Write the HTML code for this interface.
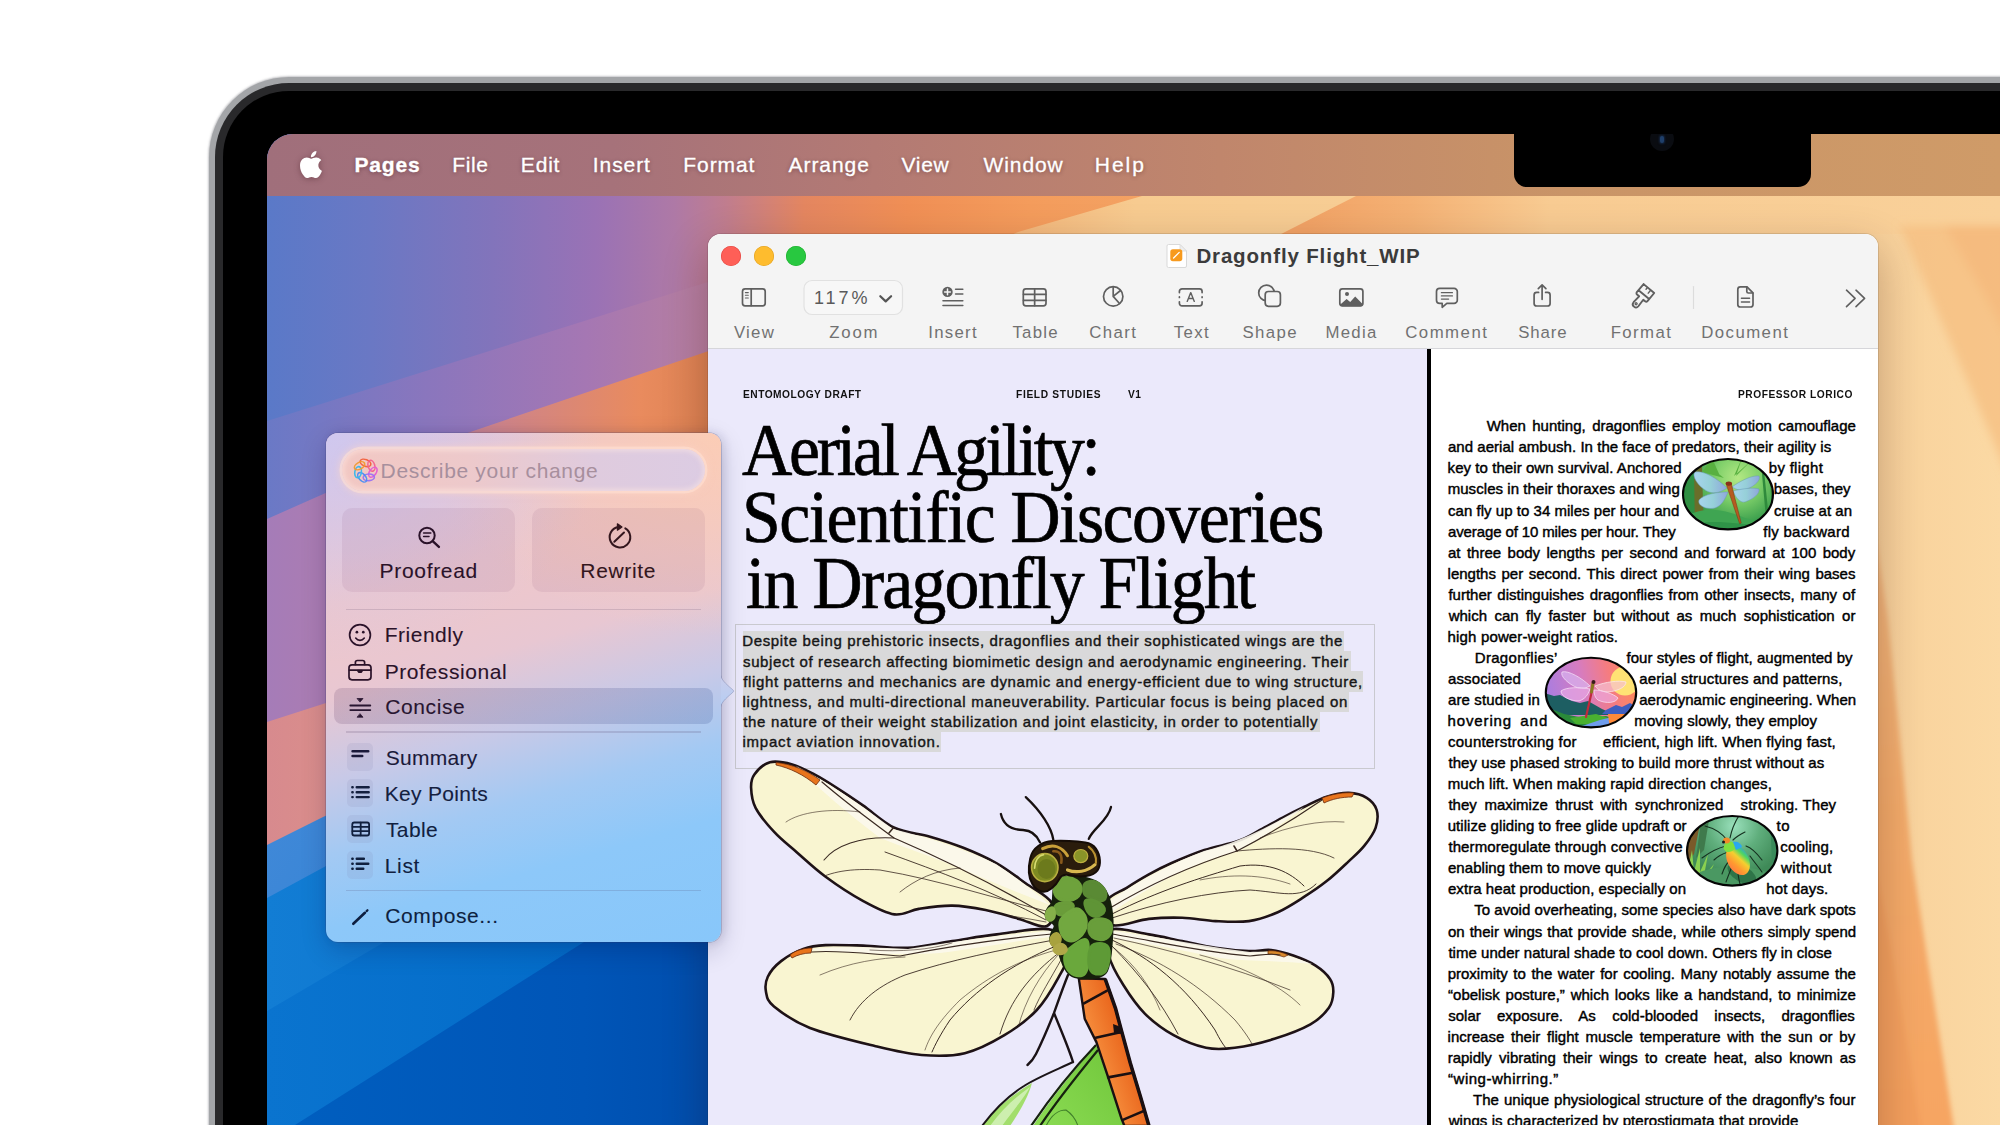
<!DOCTYPE html>
<html lang="en">
<head>
<meta charset="utf-8">
<title>Pages — Dragonfly Flight_WIP</title>
<style>
*{box-sizing:border-box;margin:0;padding:0}
html,body{width:2000px;height:1125px;overflow:hidden;background:#fff}
body{position:relative;font-family:"Liberation Sans",sans-serif;color:#000}
.abs{position:absolute}
/* laptop */
#rim{position:absolute;left:209px;top:77px;width:1900px;height:1200px;border-radius:80px;
  background:#a3a5a8;box-shadow:0 0 2px 1px rgba(160,160,165,.6)}
#rim2{position:absolute;left:215px;top:83px;width:1900px;height:1200px;border-radius:74px;background:#29292b}
#bezel{position:absolute;left:223px;top:91px;width:1900px;height:1200px;border-radius:66px;background:#000}
#screen{position:absolute;left:267px;top:134px;width:1733px;height:991px;border-top-left-radius:26px;overflow:hidden;background:#5d78c5}
#screen>svg.wall{position:absolute;left:0;top:0}
/* menu bar */
#menubar{position:absolute;left:0;top:0;width:1733px;height:62px;
  background:linear-gradient(90deg,#a06f7b 0%,#a6727a 20%,#b37a74 35%,#c0866c 55%,#c99467 75%,#cf9b68 100%)}
.t{position:absolute;white-space:nowrap;display:block}
.pp{-webkit-text-stroke:.1px currentColor}
.hh{-webkit-text-stroke:.7px #000}
.mi{-webkit-text-stroke:.3px #fff;text-shadow:0 1px 4px rgba(60,20,30,.45)}
.rt{-webkit-text-stroke:.42px #000}
.bt{-webkit-text-stroke:.4px #161616}
#notch{position:absolute;left:1247px;top:-20px;width:297px;height:73px;border-radius:13px;background:#000}
#cam{position:absolute;left:1383.400px;top:-6.800px;width:24px;height:24px;border-radius:50%;background:#0a0c11}
#cam i{position:absolute;left:10px;top:8.500px;width:4px;height:7px;border-radius:2px;background:#1f3f6a;box-shadow:0 0 2px 1px rgba(30,60,110,.5)}
/* window */
#win{position:absolute;left:441px;top:100px;width:1170px;height:950px;border-radius:13px 13px 0 0;overflow:hidden;
  background:#fff;}
#winshadow{position:absolute;left:441px;top:100px;width:1170px;height:950px;border-radius:13px;
  box-shadow:0 16px 44px 2px rgba(40,10,10,.24),0 0 0 1px rgba(0,0,0,.1)}
#tb{position:absolute;left:0;top:0;width:1170px;height:115px;background:#f4f4f4;border-bottom:1px solid #d6d6da}
.tl{position:absolute;top:12px;width:20px;height:20px;border-radius:50%}
.lbl{position:absolute;top:86px;height:24px;line-height:24px;font-size:18px;color:#717171;white-space:nowrap;letter-spacing:.4px}
.ico{position:absolute;overflow:visible}
#pageL{position:absolute;left:0;top:115px;width:719px;height:841px;background:#ebe9fb}
#divider{position:absolute;left:719px;top:115px;width:4px;height:841px;background:#000}
#pageR{position:absolute;left:723px;top:115px;width:447px;height:841px;background:#fff}
.cap{position:absolute;font-size:10.5px;font-weight:bold;letter-spacing:.35px;white-space:nowrap;line-height:12px;color:#111}
.h1{position:absolute;left:0;white-space:nowrap;font-family:"Liberation Serif",serif;font-size:76px;line-height:80px;color:#000;transform-origin:0 50%}
.bl{position:absolute;white-space:nowrap;font-size:14.6px;line-height:20px;height:20px;color:#111;-webkit-text-stroke:.25px #111}
.bl b{font-weight:normal;background:#d9d9d9;display:inline-block;height:20px}
.rl{position:absolute;white-space:nowrap;font-size:14.8px;line-height:21px;height:21px;color:#000;-webkit-text-stroke:.3px #000}
/* popup */
#pop{position:absolute;left:59px;top:298.5px;width:395px;height:509px;border-radius:12px;overflow:hidden}
#popshadow{position:absolute;left:59px;top:298.5px;width:395px;height:509px;border-radius:12px;
  box-shadow:0 8px 26px rgba(0,10,60,.2),3px 0 10px rgba(40,40,80,.12),0 0 0 .8px rgba(60,70,120,.28)}
.pt{position:absolute;white-space:nowrap;font-size:21px;line-height:28px;height:28px;color:#2a1828}
.sep{position:absolute;left:20px;width:355px;height:1.5px;background:rgba(70,50,90,.16)}
.ibox{position:absolute;left:21px;width:26px;height:28px;border-radius:5px;background:rgba(120,120,170,.13)}
#popbg{position:absolute;inset:0;background:
 radial-gradient(ellipse 70% 45% at 0% 0%,rgba(206,200,240,.95),rgba(206,200,240,0) 100%),
 radial-gradient(ellipse 75% 40% at 100% 0%,rgba(252,205,180,.95),rgba(252,205,180,0) 100%),
 linear-gradient(164deg,#e6c5d8 0%,#efc7ca 28%,#e8c7d2 43%,#c8c9e7 56%,#a3c9f3 68%,#8dc8f9 80%,#88c7fa 100%)}
#sf{position:absolute;left:16.300px;top:16px;width:362.400px;height:42px;border-radius:21px;
 background:linear-gradient(90deg,#f2c8c3 0%,#edc9cb 35%,#dfcbde 70%,#dccce3 100%);
 box-shadow:0 0 0 2.500px rgba(255,226,214,.55),0 0 7px 3px rgba(255,214,196,.55),inset 0 0 5px 2px rgba(255,232,225,.55)}
.pbtn{position:absolute;border-radius:10px;background:rgba(120,60,100,.085)}
</style>
</head>
<body>
<div id="rim"></div><div id="rim2"></div><div id="bezel"></div>
<div id="screen">
<svg class="wall" width="1733" height="991" viewBox="267 134 1733 991">
<defs>
<linearGradient id="gA" gradientUnits="userSpaceOnUse" x1="267" y1="0" x2="2000" y2="0">
 <stop offset="0" stop-color="#5a79c8"/><stop offset=".06" stop-color="#6a78c4"/><stop offset=".13" stop-color="#8274bb"/>
 <stop offset=".19" stop-color="#9a72b5"/><stop offset=".235" stop-color="#ae79a6"/><stop offset=".265" stop-color="#c07d8e"/>
 <stop offset=".31" stop-color="#e48660"/><stop offset=".37" stop-color="#f08f55"/><stop offset=".44" stop-color="#f49c5c"/>
 <stop offset=".52" stop-color="#f3a364"/><stop offset=".6" stop-color="#f2a366"/><stop offset=".66" stop-color="#f4b174"/><stop offset=".74" stop-color="#f8cb92"/><stop offset="1" stop-color="#f9d19a"/>
</linearGradient>
<linearGradient id="gB" gradientUnits="userSpaceOnUse" x1="267" y1="0" x2="800" y2="0">
 <stop offset="0" stop-color="#6a79c6"/><stop offset=".3" stop-color="#8a76bd"/><stop offset=".6" stop-color="#a577b3"/>
 <stop offset=".83" stop-color="#b87f9f"/><stop offset="1" stop-color="#d08a80"/>
</linearGradient>
<linearGradient id="gC" gradientUnits="userSpaceOnUse" x1="267" y1="0" x2="800" y2="0">
 <stop offset="0" stop-color="#a57cb8"/><stop offset=".2" stop-color="#b07cac"/><stop offset=".45" stop-color="#cf8488"/>
 <stop offset=".7" stop-color="#e98b5e"/><stop offset=".83" stop-color="#dd8252"/><stop offset="1" stop-color="#cd7646"/>
</linearGradient>
<linearGradient id="gD" gradientUnits="userSpaceOnUse" x1="267" y1="0" x2="800" y2="0">
 <stop offset="0" stop-color="#d78a8e"/><stop offset=".5" stop-color="#e59a80"/><stop offset="1" stop-color="#e8a070"/>
</linearGradient>
<linearGradient id="gE" gradientUnits="userSpaceOnUse" x1="267" y1="800" x2="700" y2="1100">
 <stop offset="0" stop-color="#4189d8"/><stop offset="1" stop-color="#1c78cf"/>
</linearGradient>
<linearGradient id="gF" gradientUnits="userSpaceOnUse" x1="267" y1="0" x2="720" y2="0">
 <stop offset="0" stop-color="#127dd4"/><stop offset="1" stop-color="#076cc8"/>
</linearGradient>
<linearGradient id="gG" gradientUnits="userSpaceOnUse" x1="267" y1="0" x2="720" y2="0">
 <stop offset="0" stop-color="#0a74cf"/><stop offset="1" stop-color="#0068c6"/>
</linearGradient>
<linearGradient id="gH" gradientUnits="userSpaceOnUse" x1="267" y1="0" x2="720" y2="0">
 <stop offset="0" stop-color="#005fc0"/><stop offset=".7" stop-color="#0055b7"/><stop offset="1" stop-color="#004dac"/>
</linearGradient>
<linearGradient id="gR1" gradientUnits="userSpaceOnUse" x1="1878" y1="0" x2="2000" y2="0">
 <stop offset="0" stop-color="#f8d19b"/><stop offset="1" stop-color="#fbd9a4"/>
</linearGradient>
<linearGradient id="gR2" gradientUnits="userSpaceOnUse" x1="1878" y1="440" x2="1900" y2="1125">
 <stop offset="0" stop-color="#f0bb84"/><stop offset=".5" stop-color="#f3ac6c"/><stop offset="1" stop-color="#f6a562"/>
</linearGradient>
<linearGradient id="gT2" gradientUnits="userSpaceOnUse" x1="1020" y1="0" x2="1350" y2="0">
 <stop offset="0" stop-color="#f4b87c"/><stop offset=".35" stop-color="#f7cb90"/><stop offset="1" stop-color="#f7cd94"/>
</linearGradient>
<filter id="soft" x="-20%" y="-20%" width="140%" height="140%"><feGaussianBlur stdDeviation="5"/></filter><filter id="soft2" x="-20%" y="-20%" width="140%" height="140%"><feGaussianBlur stdDeviation="2.5"/></filter>
</defs>
<rect x="267" y="134" width="1733" height="991" fill="url(#gA)"/>
<!-- top lighter band -->
<polygon points="1000,240 1018,232 1142,196 1356,196 1285,232 1270,240" fill="url(#gT2)"/>
<!-- band B -->
<polygon points="267,421 708,282 722,277.6 722,700 267,700" fill="url(#gB)"/>
<!-- band C -->
<polygon points="267,519 400,460 469.5,432.2 708,351.2 722,346.4 722,900 267,900" fill="url(#gC)"/>
<!-- band D -->
<polygon points="267,722 326,703 720,560 720,1000 267,1000" fill="url(#gD)"/>
<!-- blue -->
<polygon points="267,845 323,817 720,640 720,1125 267,1125" fill="url(#gE)"/>
<polygon points="267,898 326,866 720,680 720,1125 267,1125" fill="url(#gF)"/>
<polygon points="267,1011 381,944 720,760 720,1125 267,1125" fill="url(#gG)"/>
<polygon points="267,1143 295,1125 584,942 720,860 720,1125" fill="url(#gH)"/>
<!-- right side -->
<rect x="1870" y="234" width="130" height="891" fill="url(#gR1)"/>
<g filter="url(#soft)">
<polygon points="1900,226 2010,226 2010,480" fill="#f6bd80" opacity=".75"/>
<polygon points="1945,226 2010,226 2010,340" fill="#f4b274" opacity=".45"/>
</g>
<g filter="url(#soft2)">
<polygon points="1860,430 1888,620 1912,860 1955,1135 1860,1135" fill="url(#gR2)"/>
<polygon points="1860,780 1893,960 1922,1135 1860,1135" fill="#f19a5a" opacity=".55"/>
</g>
</svg>
<div id="menubar">
<svg class="abs" style="left:33px;top:17px;filter:drop-shadow(0 1px 3px rgba(60,20,30,.4))" width="22" height="27" viewBox="0 0 814 1000"><path fill="#fff" d="M788.1 340.9c-5.800 4.500-108.200 62.200-108.200 190.500 0 148.400 130.300 200.900 134.200 202.200-.600 3.200-20.700 71.900-68.700 141.900-42.800 61.600-87.500 123.100-155.500 123.100s-85.500-39.500-164-39.500c-76.500 0-103.700 40.800-165.900 40.800s-105.600-57-155.500-127C46.700 790.700 0 663 0 541.800c0-194.400 126.400-297.500 250.800-297.500 66.100 0 121.200 43.400 162.700 43.400 39.500 0 101.100-46 176.300-46 28.500 0 130.900 2.600 198.300 99.200zm-234-181.500c31.100-36.900 53.100-88.100 53.100-139.300 0-7.100-.600-14.300-1.900-20.100-50.600 1.900-110.800 33.700-147.100 75.800-28.500 32.400-55.100 83.600-55.100 135.500 0 7.800 1.300 15.600 1.900 18.100 3.200.600 8.400 1.300 13.600 1.300 45.400 0 102.500-30.400 135.500-71.300z"/></svg>
<span class="t mi" style="letter-spacing:0.823px;left:87.44px;top:16.72px;font-size:21px;line-height:27px;height:27px;font-weight:bold;color:#fff;">Pages</span>
<span class="t mi" style="letter-spacing:0.551px;left:185.36px;top:16.72px;font-size:21px;line-height:27px;height:27px;color:#fff;">File</span>
<span class="t mi" style="letter-spacing:0.794px;left:253.86px;top:16.72px;font-size:21px;line-height:27px;height:27px;color:#fff;">Edit</span>
<span class="t mi" style="letter-spacing:0.910px;left:325.86px;top:16.72px;font-size:21px;line-height:27px;height:27px;color:#fff;">Insert</span>
<span class="t mi" style="letter-spacing:0.912px;left:416.36px;top:16.72px;font-size:21px;line-height:27px;height:27px;color:#fff;">Format</span>
<span class="t mi" style="letter-spacing:0.940px;left:521.50px;top:16.72px;font-size:21px;line-height:27px;height:27px;color:#fff;">Arrange</span>
<span class="t mi" style="letter-spacing:0.702px;left:634.50px;top:16.72px;font-size:21px;line-height:27px;height:27px;color:#fff;">View</span>
<span class="t mi" style="letter-spacing:0.911px;left:716.50px;top:16.72px;font-size:21px;line-height:27px;height:27px;color:#fff;">Window</span>
<span class="t mi" style="letter-spacing:1.934px;left:827.86px;top:16.72px;font-size:21px;line-height:27px;height:27px;color:#fff;">Help</span>
</div>
<div id="notch"></div><div id="cam"><i></i></div>
<div id="winshadow"></div>
<div id="win">
<div id="tb">
<div class="tl" style="left:13.0px;background:#fe5f57;box-shadow:inset 0 0 0 .6px #e14640"></div><div class="tl" style="left:45.6px;background:#febc2e;box-shadow:inset 0 0 0 .6px #dfa023"></div><div class="tl" style="left:78.0px;background:#28c840;box-shadow:inset 0 0 0 .6px #1dad2b"></div>
<svg class="abs" style="left:458px;top:9px" width="23" height="26" viewBox="0 0 23 26"><path d="M2.500 1.500h11.500l6.500 6.500v15a1.500 1.500 0 0 1-1.500 1.500h-16.500a1.500 1.500 0 0 1-1.500-1.500v-20a1.500 1.500 0 0 1 1.500-1.500z" fill="#fff" stroke="#d9d9d9" stroke-width="1"/><path d="M14 1.500v5a1.500 1.500 0 0 0 1.500 1.500h5z" fill="#eee" stroke="#d9d9d9" stroke-width=".8"/><rect x="4.300" y="6.200" width="12" height="12" rx="2.600" fill="#f79a1e"/><path d="M7.600 15l5.600-5.600" stroke="#fff" stroke-width="1.300" stroke-linecap="round"/></svg>
<span class="t" style="letter-spacing:0.845px;left:488.42px;top:8.20px;font-size:20.5px;line-height:27px;height:27px;font-weight:bold;color:#3b3b3b;">Dragonfly Flight_WIP</span>
<svg class="abs" style="left:0;top:0" width="1170" height="115" viewBox="708 234 1170 115" fill="none" stroke="#5f5f5f" stroke-width="1.7" stroke-linecap="round" stroke-linejoin="round">
<!-- view -->
<rect x="742.5" y="288.8" width="22.7" height="17" rx="2.6"/>
<path d="M751.2 289v16.6"/>
<path d="M745.4 292.6h2.9M745.4 295.3h2.9M745.4 298h2.9" stroke-width="1.1"/>
<!-- zoom box -->
<rect x="804" y="280.5" width="98.5" height="34" rx="8" fill="#f7f7f7" stroke="#e1e1e1" stroke-width="1.2"/>
<path d="M880.3 296.2l5.4 5.2 5.4-5.2" stroke="#555" stroke-width="2.2"/>
<!-- insert -->
<circle cx="947.5" cy="291.9" r="5.2" fill="#5f5f5f" stroke="none"/>
<path d="M944.6 291.9h5.8M947.5 289v5.8" stroke="#f4f4f4" stroke-width="1.5"/>
<path d="M955.6 289.2h7.2M955.6 294h7.2M943 300.7h19.8M943 305.5h19.8" stroke-width="1.6"/>
<!-- table -->
<rect x="1023.3" y="288.8" width="22.7" height="17" rx="2.6"/>
<path d="M1034.65 289v16.6M1023.5 294.3h22.3M1023.5 300.4h22.3"/>
<!-- chart -->
<circle cx="1113.2" cy="296.4" r="9.7"/>
<path d="M1113.2 286.9v9.5l7.3-5.9M1113.2 296.4l6.3 7.1"/>
<!-- text -->
<path d="M1179.4 292.6v-1.2a2.6 2.6 0 0 1 2.6-2.6h17.500a2.600 2.600 0 0 1 2.600 2.600v1.200M1179.4 301.8v1.400a2.600 2.600 0 0 0 2.600 2.600h17.500a2.600 2.600 0 0 0 2.600-2.600v-1.400M1179.400 296.900v.6M1202.100 296.900v.6"/>
<path d="M1187.200 301.400l3.550-8.800 3.550 8.800M1188.500 298.500h4.500" stroke-width="1.400"/>
<!-- shape -->
<circle cx="1266.500" cy="292.900" r="7.800"/>
<rect x="1265.200" y="291.500" width="15.200" height="14.800" rx="3.200" fill="#f4f4f4"/>
<!-- media -->
<rect x="1339.800" y="288.800" width="23.100" height="17" rx="2.600"/>
<circle cx="1347" cy="294" r="2" fill="#5f5f5f" stroke="none"/>
<path d="M1340.300 304.500l6.300-5.600 3.600 3 5-5.400 7.400 7.400v.6a1.800 1.800 0 0 1-1.800 1.800h-18.700a1.800 1.800 0 0 1-1.800-1.800z" fill="#5f5f5f" stroke="none"/>
<!-- comment -->
<path d="M1439.700 288.400h14.400a3.200 3.200 0 0 1 3.200 3.200v8.600a3.200 3.200 0 0 1-3.200 3.200h-7.300l-4.600 3.900v-3.900h-2.500a3.200 3.200 0 0 1-3.200-3.200v-8.600a3.200 3.200 0 0 1 3.200-3.200z"/>
<path d="M1441.400 292.700h11M1441.400 295.900h11M1441.400 299.100h7.200" stroke-width="1.300"/>
<!-- share -->
<path d="M1538.600 292.400h-1.900a2.600 2.600 0 0 0-2.600 2.600v8.400a2.600 2.600 0 0 0 2.600 2.600h10.800a2.600 2.600 0 0 0 2.600-2.600v-8.400a2.600 2.600 0 0 0-2.600-2.600h-1.900"/>
<path d="M1542.100 299.300v-14M1538.300 288.600l3.800-3.700 3.800 3.700"/>
<!-- format brush -->
<g transform="translate(1641.500 297.400) rotate(40) scale(1.1)">
<path d="M-6.300 -10.500h12.600v7.200h-12.600z M-6.300 -3.300h12.600v2.400a1.500 1.500 0 0 1-1.500 1.500h-2.200l.4 7.400a2.850 2.850 0 0 1-5.700 0l.4-7.400h-2.500a1.500 1.500 0 0 1-1.500-1.500z"/>
<path d="M-6.300 -10.500l0 0M2.200 -10.300v3.400M-1.600 -10.300v2" stroke-width="1.300"/>
<circle cx="0" cy="7.600" r=".9" stroke-width="1.200"/>
</g>
<path d="M1693.500 286.500v22" stroke="#dcdcdc" stroke-width="1.200"/>
<!-- document -->
<path d="M1740.400 286.800h6.600l6 6v11.600a2.600 2.600 0 0 1-2.600 2.600h-10a2.600 2.600 0 0 1-2.600-2.600v-15a2.600 2.600 0 0 1 2.600-2.600z"/>
<path d="M1746.800 287v4.400a1.600 1.600 0 0 0 1.600 1.600h4.400" />
<path d="M1741.400 298.300h8.200M1741.400 302h8.200" stroke-width="1.400"/>
<!-- more -->
<path d="M1846.500 290.200l8.600 8.200-8.600 8.200M1856 290.200l8.600 8.200-8.600 8.200" stroke-width="1.600"/>
</svg>
<span class="t" style="letter-spacing:2.987px;left:105.88px;top:53.26px;font-size:18px;line-height:23px;height:23px;color:#5a5a5a;">117%</span>
<span class="t" style="letter-spacing:1.229px;left:26.00px;top:88.08px;font-size:16.8px;line-height:22px;height:22px;color:#717171;">View</span>
<span class="t" style="letter-spacing:1.818px;left:121.18px;top:88.08px;font-size:16.8px;line-height:22px;height:22px;color:#717171;">Zoom</span>
<span class="t" style="letter-spacing:1.288px;left:220.19px;top:88.08px;font-size:16.8px;line-height:22px;height:22px;color:#717171;">Insert</span>
<span class="t" style="letter-spacing:1.271px;left:304.44px;top:88.08px;font-size:16.8px;line-height:22px;height:22px;color:#717171;">Table</span>
<span class="t" style="letter-spacing:1.413px;left:381.21px;top:88.08px;font-size:16.8px;line-height:22px;height:22px;color:#717171;">Chart</span>
<span class="t" style="letter-spacing:1.398px;left:465.74px;top:88.08px;font-size:16.8px;line-height:22px;height:22px;color:#717171;">Text</span>
<span class="t" style="letter-spacing:1.407px;left:534.48px;top:88.08px;font-size:16.8px;line-height:22px;height:22px;color:#717171;">Shape</span>
<span class="t" style="letter-spacing:1.313px;left:617.39px;top:88.08px;font-size:16.8px;line-height:22px;height:22px;color:#717171;">Media</span>
<span class="t" style="letter-spacing:1.486px;left:697.21px;top:88.08px;font-size:16.8px;line-height:22px;height:22px;color:#717171;">Comment</span>
<span class="t" style="letter-spacing:0.919px;left:810.18px;top:88.08px;font-size:16.8px;line-height:22px;height:22px;color:#717171;">Share</span>
<span class="t" style="letter-spacing:1.410px;left:902.69px;top:88.08px;font-size:16.8px;line-height:22px;height:22px;color:#717171;">Format</span>
<span class="t" style="letter-spacing:1.456px;left:993.19px;top:88.08px;font-size:16.8px;line-height:22px;height:22px;color:#717171;">Document</span>
</div>
<div id="pageL"></div><div id="divider"></div><div id="pageR"></div>
<span class="t" style="letter-spacing:0.559px;left:34.84px;top:152.08px;font-size:11.6px;line-height:15px;height:15px;font-weight:bold;color:#111;transform:scaleX(0.88);transform-origin:0 50%;">ENTOMOLOGY DRAFT</span>
<span class="t" style="letter-spacing:0.755px;left:307.84px;top:152.08px;font-size:11.6px;line-height:15px;height:15px;font-weight:bold;color:#111;transform:scaleX(0.88);transform-origin:0 50%;">FIELD STUDIES</span>
<span class="t" style="letter-spacing:0.456px;left:420.35px;top:152.08px;font-size:11.6px;line-height:15px;height:15px;font-weight:bold;color:#111;transform:scaleX(0.88);transform-origin:0 50%;">V1</span>
<span class="t" style="letter-spacing:0.587px;left:1029.94px;top:152.08px;font-size:11.6px;line-height:15px;height:15px;font-weight:bold;color:#111;transform:scaleX(0.88);transform-origin:0 50%;">PROFESSOR LORICO</span>
<span class="t hh" style="letter-spacing:-3.534px;left:34.30px;top:176.29px;font-size:75px;line-height:80px;height:80px;font-family:'Liberation Serif',serif;color:#000;transform:scaleX(0.93);transform-origin:0 50%;">Aerial Agility:</span>
<span class="t hh" style="letter-spacing:-1.616px;left:33.64px;top:242.69px;font-size:75px;line-height:80px;height:80px;font-family:'Liberation Serif',serif;color:#000;transform:scaleX(0.93);transform-origin:0 50%;">Scientific Discoveries</span>
<span class="t hh" style="letter-spacing:-1.925px;left:37.91px;top:309.49px;font-size:75px;line-height:80px;height:80px;font-family:'Liberation Serif',serif;color:#000;transform:scaleX(0.93);transform-origin:0 50%;">in Dragonfly Flight</span>
<div class="abs" style="left:27px;top:389.5px;width:640px;height:145px;border:1px solid #c9c9cf"></div>
<div class="abs" style="left:34.6px;top:397.2px;width:601.6px;height:20.3px;background:#d9d9da"></div><span class="t bt" style="letter-spacing:0.661px;left:34.21px;top:397.40px;font-size:15px;line-height:20px;height:20px;color:#161616;">Despite being prehistoric insects, dragonflies and their sophisticated wings are the</span>
<div class="abs" style="left:34.6px;top:417.2px;width:608.1px;height:20.3px;background:#d9d9da"></div><span class="t bt" style="letter-spacing:0.612px;left:35.02px;top:417.56px;font-size:15px;line-height:20px;height:20px;color:#161616;">subject of research affecting biomimetic design and aerodynamic engineering. Their</span>
<div class="abs" style="left:34.6px;top:437.3px;width:620.7px;height:20.3px;background:#d9d9da"></div><span class="t bt" style="letter-spacing:0.651px;left:35.21px;top:437.72px;font-size:15px;line-height:20px;height:20px;color:#161616;">flight patterns and mechanics are dynamic and energy-efficient due to wing structure,</span>
<div class="abs" style="left:34.6px;top:457.4px;width:606.3px;height:20.3px;background:#d9d9da"></div><span class="t bt" style="letter-spacing:0.694px;left:34.40px;top:457.88px;font-size:15px;line-height:20px;height:20px;color:#161616;">lightness, and multi-directional maneuverability. Particular focus is being placed on</span>
<div class="abs" style="left:34.6px;top:477.4px;width:577.5px;height:20.3px;background:#d9d9da"></div><span class="t bt" style="letter-spacing:0.679px;left:35.21px;top:478.04px;font-size:15px;line-height:20px;height:20px;color:#161616;">the nature of their weight stabilization and joint elasticity, in order to potentially</span>
<div class="abs" style="left:34.6px;top:497.5px;width:198.4px;height:20.3px;background:#d9d9da"></div><span class="t bt" style="letter-spacing:0.796px;left:34.40px;top:498.20px;font-size:15px;line-height:20px;height:20px;color:#161616;">impact aviation innovation.</span>
<svg class="abs" style="left:0;top:116px" width="719" height="775" viewBox="708 350 719 775">
<defs><linearGradient id="abd" gradientUnits="userSpaceOnUse" x1="1080" y1="1000" x2="1110" y2="990"><stop offset="0" stop-color="#f58a3a"/><stop offset="1" stop-color="#e9651c"/></linearGradient><linearGradient id="leaf" gradientUnits="userSpaceOnUse" x1="1030" y1="1125" x2="1110" y2="1060"><stop offset="0" stop-color="#8cdc54"/><stop offset="1" stop-color="#74c93e"/></linearGradient></defs>
<path d="M982 1126C992 1112 1010 1096 1032 1083C1028 1098 1018 1114 1010 1126Z" fill="#a2de6c" stroke="none"/>
<path d="M990 1126C1000 1112 1014 1098 1030 1087C1024 1098 1012 1112 1002 1126Z" fill="#d8f2c0" opacity=".8"/>
<path d="M1033 1126C1050 1100 1076 1068 1096 1045C1104 1066 1116 1100 1126 1126Z" fill="url(#leaf)"/>
<path d="M1096 1045C1076 1066 1050 1098 1031 1126M1098 1050C1080 1072 1056 1102 1040 1126" fill="none" stroke="#16220f" stroke-width="2.200"/>
<path d="M1046 1126C1052 1114 1058 1110 1066 1110C1072 1114 1076 1120 1078 1126" fill="none" stroke="#2f6a22" stroke-width="1.100" opacity=".8"/>
<path d="M1073 1062C1056 1070 1036 1078 1024 1086C1008 1096 994 1110 982 1126" fill="none" stroke="#1a1418" stroke-width="2"/>
<path d="M1068 975C1062 990 1058 1002 1054 1013C1048 1028 1042 1042 1036 1054C1034 1058 1031 1062 1027.500 1065M1054 1013C1060 1028 1068 1046 1073 1062" fill="none" stroke="#1a1216" stroke-width="2.400" stroke-linecap="round" stroke-linejoin="round"/>
<path d="M1052.0 930.0C1040.5 926.4 1013.3 932.5 996.7 934.4C980.1 936.2 967.0 938.9 952.2 941.1C937.4 943.3 922.6 947.0 907.8 947.8C893.0 948.5 877.0 946.0 863.3 945.6C849.6 945.2 835.6 944.6 825.6 945.1C815.6 945.6 810.7 946.2 803.3 948.9C795.9 951.6 787.0 956.5 781.1 961.1C775.2 965.7 770.3 971.6 767.8 976.7C765.3 981.9 765.0 987.0 766.0 992.0C767.0 997.0 766.7 1000.4 774.0 1006.4C781.3 1012.4 793.2 1021.4 810.0 1028.0C826.8 1034.6 856.2 1041.5 874.8 1046.0C893.4 1050.5 906.6 1053.8 921.6 1055.0C936.6 1056.2 951.0 1056.5 964.8 1053.2C978.6 1049.9 992.4 1042.4 1004.4 1035.2C1016.4 1028.0 1027.8 1019.6 1036.8 1010.0C1045.8 1000.4 1053.5 986.6 1058.4 977.6C1063.3 968.6 1067.1 963.9 1066.0 956.0C1064.9 948.1 1063.5 933.6 1052.0 930.0Z" fill="#f9f5d1" stroke="#1e1216" stroke-width="2.600" stroke-linejoin="round"/>
<path d="M1110.0 930.0C1116.7 926.4 1136.9 932.5 1148.9 934.4C1160.9 936.2 1171.1 938.9 1182.2 941.1C1193.3 943.3 1204.5 946.1 1215.6 947.8C1226.7 949.5 1239.7 950.7 1248.9 951.1C1258.2 951.5 1263.7 949.2 1271.1 950.0C1278.5 950.8 1285.9 953.0 1293.3 955.6C1300.7 958.2 1309.5 961.7 1315.6 965.6C1321.7 969.5 1327.0 974.5 1330.0 978.9C1333.0 983.3 1333.5 987.4 1333.3 992.2C1333.1 997.0 1332.7 1002.4 1328.9 1007.8C1325.1 1013.2 1319.5 1019.2 1310.4 1024.4C1301.3 1029.6 1287.0 1034.9 1274.4 1038.8C1261.8 1042.7 1246.2 1046.3 1234.8 1047.8C1223.4 1049.3 1216.2 1049.9 1206.0 1047.8C1195.8 1045.7 1183.8 1040.9 1173.6 1035.2C1163.4 1029.5 1153.2 1022.0 1144.8 1013.6C1136.4 1005.2 1129.2 994.4 1123.2 984.8C1117.2 975.2 1111.2 965.1 1109.0 956.0C1106.8 946.9 1103.3 933.6 1110.0 930.0Z" fill="#f9f5d1" stroke="#1e1216" stroke-width="2.600" stroke-linejoin="round"/>
<path d="M770.0 762.2C763.7 763.9 757.5 770.1 754.4 774.4C751.2 778.7 750.9 782.2 751.1 787.8C751.3 793.4 751.7 800.4 755.6 807.8C759.5 815.2 767.5 824.8 774.4 832.2C781.2 839.6 788.2 844.8 796.7 852.2C805.2 859.6 814.5 868.6 825.6 876.7C836.7 884.9 851.8 894.8 863.3 901.1C874.8 907.4 885.1 913.1 894.4 914.4C903.7 915.7 909.3 910.4 918.9 908.9C928.5 907.4 941.1 905.4 952.2 905.6C963.3 905.8 974.5 907.8 985.6 910.0C996.7 912.2 1008.7 916.2 1018.9 918.9C1029.1 921.6 1041.5 928.6 1047.0 926.0C1052.5 923.4 1055.6 910.4 1052.0 903.3C1048.4 896.2 1034.8 890.0 1025.6 883.3C1016.4 876.6 1007.1 869.2 996.7 863.3C986.3 857.4 974.4 852.2 963.3 847.8C952.2 843.4 941.5 840.0 930.0 836.7C918.5 833.4 905.5 833.0 894.4 827.8C883.3 822.6 872.9 812.3 863.3 805.6C853.7 798.9 844.9 793.0 836.7 787.8C828.6 782.6 821.8 778.3 814.4 774.4C807.0 770.5 799.6 766.4 792.2 764.4C784.8 762.4 776.3 760.5 770.0 762.2Z" fill="#f9f5d1" stroke="#1e1216" stroke-width="2.600" stroke-linejoin="round"/>
<path d="M1106.7 901.1C1109.2 894.9 1119.7 892.2 1126.7 887.8C1133.7 883.3 1141.5 878.5 1148.9 874.4C1156.3 870.3 1161.8 867.4 1171.1 863.3C1180.3 859.2 1193.3 853.7 1204.4 850.0C1215.5 846.3 1228.5 844.4 1237.8 841.1C1247.1 837.8 1252.6 833.9 1260.0 830.0C1267.4 826.1 1274.8 821.7 1282.2 817.8C1289.6 813.9 1297.0 810.2 1304.4 806.7C1311.8 803.2 1319.3 799.0 1326.7 796.7C1334.1 794.4 1342.2 792.7 1348.9 792.9C1355.6 793.1 1362.1 794.9 1366.7 797.8C1371.3 800.6 1375.2 805.0 1376.7 810.0C1378.2 815.0 1377.6 821.9 1375.6 827.8C1373.5 833.7 1368.9 840.0 1364.4 845.6C1360.0 851.2 1355.2 855.2 1348.9 861.1C1342.6 867.0 1334.1 875.2 1326.7 881.1C1319.3 887.0 1312.6 891.5 1304.4 896.7C1296.2 901.9 1287.0 908.1 1277.8 912.2C1268.5 916.3 1259.3 919.6 1248.9 921.1C1238.5 922.6 1226.7 921.7 1215.6 921.1C1204.5 920.5 1193.3 918.2 1182.2 917.8C1171.1 917.4 1160.6 917.7 1148.9 918.9C1137.2 920.1 1119.0 928.0 1112.0 925.0C1105.0 922.0 1104.2 907.3 1106.7 901.1Z" fill="#f9f5d1" stroke="#1e1216" stroke-width="2.600" stroke-linejoin="round"/>
<path d="M796 766C830 783 862 806 893 829C930 838 964 849 996 864C1020 880 1040 896 1050 905C1030 897 1000 886 960 868C930 856 900 846 880 838C850 815 820 790 796 766Z" fill="#fbf8ec" opacity=".9"/>
<path d="M1108 902C1140 880 1170 864 1204 851C1240 842 1262 830 1304 807C1280 826 1250 846 1236 852C1200 860 1160 880 1112 912Z" fill="#fbf8ec" opacity=".9"/>
<path d="M1050 931C1000 935 950 942 908 949C870 947 830 946 804 950C850 952 900 956 940 953C980 948 1020 940 1050 937Z" fill="#fbf8ec" opacity=".9"/>
<path d="M1112 931C1150 935 1200 946 1250 952C1270 951 1290 955 1312 964C1280 960 1250 962 1220 958C1180 950 1140 942 1112 938Z" fill="#fbf8ec" opacity=".9"/>
<path d="M776 762.500C792 764 808 771 820 780L816 785C804 775 790 768 776 765Z" fill="#e8741c" stroke="#6a2a0c" stroke-width=".800"/>
<path d="M1322 798C1332 794 1344 792 1354 793L1352 797C1342 797 1332 799 1324 803Z" fill="#e8741c" stroke="#6a2a0c" stroke-width=".800"/>
<path d="M790 955C796 950 804 948 812 948L811 953C804 953 797 955 792 958Z" fill="#e8741c" stroke="#6a2a0c" stroke-width=".800"/>
<path d="M1268 951C1274 950 1282 952 1288 955L1284 957C1278 955 1272 954 1268 954Z" fill="#d98a2c" stroke="#6a2a0c" stroke-width=".700"/>
<clipPath id="wc"><path d="M1052.0 930.0C1040.5 926.4 1013.3 932.5 996.7 934.4C980.1 936.2 967.0 938.9 952.2 941.1C937.4 943.3 922.6 947.0 907.8 947.8C893.0 948.5 877.0 946.0 863.3 945.6C849.6 945.2 835.6 944.6 825.6 945.1C815.6 945.6 810.7 946.2 803.3 948.9C795.9 951.6 787.0 956.5 781.1 961.1C775.2 965.7 770.3 971.6 767.8 976.7C765.3 981.9 765.0 987.0 766.0 992.0C767.0 997.0 766.7 1000.4 774.0 1006.4C781.3 1012.4 793.2 1021.4 810.0 1028.0C826.8 1034.6 856.2 1041.5 874.8 1046.0C893.4 1050.5 906.6 1053.8 921.6 1055.0C936.6 1056.2 951.0 1056.5 964.8 1053.2C978.6 1049.9 992.4 1042.4 1004.4 1035.2C1016.4 1028.0 1027.8 1019.6 1036.8 1010.0C1045.8 1000.4 1053.5 986.6 1058.4 977.6C1063.3 968.6 1067.1 963.9 1066.0 956.0C1064.9 948.1 1063.5 933.6 1052.0 930.0Z"/><path d="M1110.0 930.0C1116.7 926.4 1136.9 932.5 1148.9 934.4C1160.9 936.2 1171.1 938.9 1182.2 941.1C1193.3 943.3 1204.5 946.1 1215.6 947.8C1226.7 949.5 1239.7 950.7 1248.9 951.1C1258.2 951.5 1263.7 949.2 1271.1 950.0C1278.5 950.8 1285.9 953.0 1293.3 955.6C1300.7 958.2 1309.5 961.7 1315.6 965.6C1321.7 969.5 1327.0 974.5 1330.0 978.9C1333.0 983.3 1333.5 987.4 1333.3 992.2C1333.1 997.0 1332.7 1002.4 1328.9 1007.8C1325.1 1013.2 1319.5 1019.2 1310.4 1024.4C1301.3 1029.6 1287.0 1034.9 1274.4 1038.8C1261.8 1042.7 1246.2 1046.3 1234.8 1047.8C1223.4 1049.3 1216.2 1049.9 1206.0 1047.8C1195.8 1045.7 1183.8 1040.9 1173.6 1035.2C1163.4 1029.5 1153.2 1022.0 1144.8 1013.6C1136.4 1005.2 1129.2 994.4 1123.2 984.8C1117.2 975.2 1111.2 965.1 1109.0 956.0C1106.8 946.9 1103.3 933.6 1110.0 930.0Z"/><path d="M770.0 762.2C763.7 763.9 757.5 770.1 754.4 774.4C751.2 778.7 750.9 782.2 751.1 787.8C751.3 793.4 751.7 800.4 755.6 807.8C759.5 815.2 767.5 824.8 774.4 832.2C781.2 839.6 788.2 844.8 796.7 852.2C805.2 859.6 814.5 868.6 825.6 876.7C836.7 884.9 851.8 894.8 863.3 901.1C874.8 907.4 885.1 913.1 894.4 914.4C903.7 915.7 909.3 910.4 918.9 908.9C928.5 907.4 941.1 905.4 952.2 905.6C963.3 905.8 974.5 907.8 985.6 910.0C996.7 912.2 1008.7 916.2 1018.9 918.9C1029.1 921.6 1041.5 928.6 1047.0 926.0C1052.5 923.4 1055.6 910.4 1052.0 903.3C1048.4 896.2 1034.8 890.0 1025.6 883.3C1016.4 876.6 1007.1 869.2 996.7 863.3C986.3 857.4 974.4 852.2 963.3 847.8C952.2 843.4 941.5 840.0 930.0 836.7C918.5 833.4 905.5 833.0 894.4 827.8C883.3 822.6 872.9 812.3 863.3 805.6C853.7 798.9 844.9 793.0 836.7 787.8C828.6 782.6 821.8 778.3 814.4 774.4C807.0 770.5 799.6 766.4 792.2 764.4C784.8 762.4 776.3 760.5 770.0 762.2Z"/><path d="M1106.7 901.1C1109.2 894.9 1119.7 892.2 1126.7 887.8C1133.7 883.3 1141.5 878.5 1148.9 874.4C1156.3 870.3 1161.8 867.4 1171.1 863.3C1180.3 859.2 1193.3 853.7 1204.4 850.0C1215.5 846.3 1228.5 844.4 1237.8 841.1C1247.1 837.8 1252.6 833.9 1260.0 830.0C1267.4 826.1 1274.8 821.7 1282.2 817.8C1289.6 813.9 1297.0 810.2 1304.4 806.7C1311.8 803.2 1319.3 799.0 1326.7 796.7C1334.1 794.4 1342.2 792.7 1348.9 792.9C1355.6 793.1 1362.1 794.9 1366.7 797.8C1371.3 800.6 1375.2 805.0 1376.7 810.0C1378.2 815.0 1377.6 821.9 1375.6 827.8C1373.5 833.7 1368.9 840.0 1364.4 845.6C1360.0 851.2 1355.2 855.2 1348.9 861.1C1342.6 867.0 1334.1 875.2 1326.7 881.1C1319.3 887.0 1312.6 891.5 1304.4 896.7C1296.2 901.9 1287.0 908.1 1277.8 912.2C1268.5 916.3 1259.3 919.6 1248.9 921.1C1238.5 922.6 1226.7 921.7 1215.6 921.1C1204.5 920.5 1193.3 918.2 1182.2 917.8C1171.1 917.4 1160.6 917.7 1148.9 918.9C1137.2 920.1 1119.0 928.0 1112.0 925.0C1105.0 922.0 1104.2 907.3 1106.7 901.1Z"/></clipPath><g clip-path="url(#wc)">
<path d="M1046 915C1000 888 950 862 894 838C870 820 850 806 822 782" fill="none" stroke="#3a2a22" stroke-linecap="round" stroke-width="1.2"/>
<path d="M1046 920C990 890 940 872 885 852" fill="none" stroke="#3a2a22" stroke-linecap="round" stroke-width="0.9"/>
<path d="M894 838C860 836 835 846 824 860" fill="none" stroke="#3a2a22" stroke-linecap="round" stroke-width="1.1"/>
<path d="M960 868C935 870 915 880 900 892" fill="none" stroke="#3a2a22" stroke-linecap="round" stroke-width="0.7"/>
<path d="M860 812C830 808 800 812 786 822" fill="none" stroke="#3a2a22" stroke-linecap="round" stroke-width="0.6"/>
<path d="M889 833L894 827" fill="none" stroke="#3a2a22" stroke-linecap="round" stroke-width="1.6"/>
<path d="M1052 934C990 940 940 948 900 956C870 954 840 950 812 952" fill="none" stroke="#3a2a22" stroke-linecap="round" stroke-width="1.1"/>
<path d="M1054 940C1000 950 950 960 905 975C880 985 860 1000 850 1020" fill="none" stroke="#3a2a22" stroke-linecap="round" stroke-width="0.9"/>
<path d="M1056 946C1010 965 975 990 950 1020C940 1035 935 1045 932 1052" fill="none" stroke="#3a2a22" stroke-linecap="round" stroke-width="1"/>
<path d="M1060 952C1030 975 1010 1000 1000 1034" fill="none" stroke="#3a2a22" stroke-linecap="round" stroke-width="0.9"/>
<path d="M1062 958C1050 980 1040 995 1034 1010" fill="none" stroke="#3a2a22" stroke-linecap="round" stroke-width="0.8"/>
<path d="M905 957C880 958 850 962 820 975" fill="none" stroke="#3a2a22" stroke-linecap="round" stroke-width="0.6"/>
<path d="M1110 908C1150 884 1190 866 1237 851C1262 838 1290 822 1322 800" fill="none" stroke="#3a2a22" stroke-linecap="round" stroke-width="1.2"/>
<path d="M1112 914C1160 890 1200 878 1240 866C1270 862 1290 872 1304 886" fill="none" stroke="#3a2a22" stroke-linecap="round" stroke-width="1"/>
<path d="M1237 851C1270 848 1310 846 1334 858" fill="none" stroke="#3a2a22" stroke-linecap="round" stroke-width="0.8"/>
<path d="M1237 851L1234 846" fill="none" stroke="#3a2a22" stroke-linecap="round" stroke-width="1.6"/>
<path d="M1260 838C1290 826 1320 820 1344 822" fill="none" stroke="#3a2a22" stroke-linecap="round" stroke-width="0.6"/>
<path d="M1112 934C1150 940 1200 952 1250 956C1262 955 1272 953 1280 955" fill="none" stroke="#3a2a22" stroke-linecap="round" stroke-width="1.1"/>
<path d="M1112 940C1150 958 1185 985 1215 1030C1220 1040 1224 1046 1226 1048" fill="none" stroke="#3a2a22" stroke-linecap="round" stroke-width="1"/>
<path d="M1112 946C1140 975 1160 1000 1178 1034" fill="none" stroke="#3a2a22" stroke-linecap="round" stroke-width="0.9"/>
<path d="M1114 938C1170 950 1230 966 1290 990" fill="none" stroke="#3a2a22" stroke-linecap="round" stroke-width="0.7"/>
<path d="M1200 955C1240 965 1280 985 1300 1005" fill="none" stroke="#3a2a22" stroke-linecap="round" stroke-width="0.6"/>
<path d="M1112 918C1160 902 1210 892 1250 890C1280 892 1300 900 1316 884" fill="none" stroke="#3a2a22" stroke-linecap="round" stroke-width="0.9"/>
<path d="M1200 880C1230 874 1262 874 1290 884" fill="none" stroke="#3a2a22" stroke-linecap="round" stroke-width="0.6"/>
<path d="M1050 912C1000 900 940 880 880 870C850 868 830 872 816 880" fill="none" stroke="#3a2a22" stroke-linecap="round" stroke-width="0.8"/>
<path d="M1046 922C1010 915 980 912 950 908" fill="none" stroke="#3a2a22" stroke-linecap="round" stroke-width="0.7"/>
<path d="M1056 950C1020 960 990 975 960 1000C940 1020 930 1035 925 1050" fill="none" stroke="#3a2a22" stroke-linecap="round" stroke-width="0.6"/>
<path d="M1058 955C1040 975 1025 1000 1018 1028" fill="none" stroke="#3a2a22" stroke-linecap="round" stroke-width="0.6"/>
<path d="M1114 948C1135 965 1150 985 1160 1010" fill="none" stroke="#3a2a22" stroke-linecap="round" stroke-width="0.6"/>
<path d="M1116 944C1160 960 1200 985 1235 1020C1245 1032 1250 1040 1252 1044" fill="none" stroke="#3a2a22" stroke-linecap="round" stroke-width="0.7"/>
<path d="M952 943C930 950 900 952 870 950" fill="none" stroke="#3a2a22" stroke-linecap="round" stroke-width="0.6"/>
</g>
<path d="M1000.9 814.0 C1003.6 825.5 1012.4 830.0 1023.1 830.0 C1032.0 830.5 1037.3 836.2 1040.0 842.4" fill="none" stroke="#17100f" stroke-width="2.300" stroke-linecap="round"/>
<path d="M1025.8 797.1 C1040.9 811.3 1051.5 827.3 1053.3 839.7" fill="none" stroke="#17100f" stroke-width="2.300" stroke-linecap="round"/>
<path d="M1111.0 806.9 C1108.3 820.2 1092.4 829.1 1088.8 838.8" fill="none" stroke="#17100f" stroke-width="2.300" stroke-linecap="round"/>
<path d="M1078.800 978.300L1105.200 979L1115.500 1008.400L1121.400 1030.400L1130.200 1062.700L1140.400 1096.400L1149 1126L1124.500 1126L1121.400 1118.400L1108.200 1077.400L1096.400 1042.100L1084.700 1018.700Z" fill="url(#abd)" stroke="#1a1012" stroke-width="2.400" stroke-linejoin="round"/>
<path d="M1105.200 979L1115.500 1008.400L1121.400 1030.400L1130.200 1062.700L1140.400 1096.400L1149 1126" stroke="#1a1012" stroke-width="3.600" fill="none"/>
<path d="M1084 1003.300L1106.700 990.800M1095.700 1037.700L1119.200 1032.600M1108.200 1077.400L1131.600 1073M1122.800 1119.900L1143.400 1111.100" stroke="#1a1012" stroke-width="2.600" fill="none" stroke-linecap="round"/>
<path d="M1113 1024l8 3 1 7-8-1z" fill="#1a1012"/>
<path d="M1053.3 896.6Q1053.3 889.5 1055.1 884.1Q1056.8 878.8 1063.9 877.5Q1071.0 876.1 1081.7 877.5Q1092.4 878.8 1099.5 884.1Q1106.6 889.5 1109.7 901.9Q1112.8 914.3 1112.3 927.7Q1111.9 941.0 1110.6 953.4Q1109.2 965.8 1106.6 971.2Q1103.9 976.5 1094.6 977.6Q1085.3 978.6 1078.2 977.6Q1071.0 976.5 1067.1 971.2Q1063.1 965.8 1060.8 957.9Q1058.6 949.9 1054.2 946.3Q1049.7 942.8 1050.6 937.4Q1051.5 932.1 1054.2 928.5Q1056.8 925.0 1050.6 921.4Q1044.4 917.9 1046.2 912.6Q1048.0 907.2 1050.6 905.5Q1053.3 903.7 1053.3 896.6Z" fill="#15200c" stroke="#15200c" stroke-width="2.5" stroke-linejoin="round"/>
<path d="M1055.1 893.9Q1053.3 889.5 1056.0 884.1Q1058.6 878.8 1064.8 877.9Q1071.0 877.0 1076.4 880.6Q1081.7 884.1 1080.8 890.4Q1079.9 896.6 1073.7 899.2Q1067.5 901.9 1062.2 900.1Q1056.8 898.3 1055.1 893.9Z" fill="#6ea23c" stroke="#6ea23c" stroke-width="3.2" stroke-linejoin="round"/>
<path d="M1083.5 888.6Q1083.5 882.4 1089.7 881.5Q1095.9 880.6 1101.2 885.9Q1106.6 891.2 1105.7 896.6Q1104.8 901.9 1098.6 900.1Q1092.4 898.3 1087.9 896.6Q1083.5 894.8 1083.5 888.6Z" fill="#5a8a34" stroke="#5a8a34" stroke-width="3.2" stroke-linejoin="round"/>
<path d="M1055.1 908.1Q1055.1 903.7 1063.1 902.8Q1071.0 901.9 1072.8 904.6Q1074.6 907.2 1068.4 911.7Q1062.2 916.1 1058.6 914.3Q1055.1 912.6 1055.1 908.1Z" fill="#6a9c3a" stroke="#6a9c3a" stroke-width="3.2" stroke-linejoin="round"/>
<path d="M1085.3 905.5Q1083.5 898.3 1091.5 900.1Q1099.5 901.9 1103.0 906.3Q1106.6 910.8 1101.2 914.3Q1095.9 917.9 1091.5 915.2Q1087.0 912.6 1085.3 905.5Z" fill="#5f9436" stroke="#5f9436" stroke-width="3.2" stroke-linejoin="round"/>
<path d="M1060.4 929.4Q1058.6 921.4 1063.1 917.0Q1067.5 912.6 1072.8 909.9Q1078.2 907.2 1082.6 912.6Q1087.0 917.9 1086.1 925.0Q1085.3 932.1 1079.0 937.4Q1072.8 942.8 1067.5 940.1Q1062.2 937.4 1060.4 929.4Z" fill="#72a840" stroke="#72a840" stroke-width="3.2" stroke-linejoin="round"/>
<path d="M1088.8 928.5Q1088.8 921.4 1094.1 919.7Q1099.5 917.9 1105.7 919.7Q1111.9 921.4 1111.5 928.5Q1111.0 935.6 1106.1 938.3Q1101.2 941.0 1095.0 938.3Q1088.8 935.6 1088.8 928.5Z" fill="#699e3b" stroke="#699e3b" stroke-width="3.2" stroke-linejoin="round"/>
<path d="M1064.8 960.5Q1063.9 953.4 1069.3 949.0Q1074.6 944.5 1080.8 941.0Q1087.0 937.4 1087.9 943.6Q1088.8 949.9 1087.9 962.3Q1087.0 974.7 1080.8 975.6Q1074.6 976.5 1070.2 972.1Q1065.7 967.6 1064.8 960.5Z" fill="#6aa83c" stroke="#6aa83c" stroke-width="3.2" stroke-linejoin="round"/>
<path d="M1088.8 959.6Q1088.8 946.3 1094.1 944.5Q1099.5 942.8 1104.8 944.5Q1110.1 946.3 1109.2 956.1Q1108.3 965.8 1105.7 970.3Q1103.0 974.7 1095.9 973.8Q1088.8 972.9 1088.8 959.6Z" fill="#5e9a36" stroke="#5e9a36" stroke-width="3.2" stroke-linejoin="round"/>
<path d="M1051.1 941.0Q1050.6 937.4 1053.7 934.8Q1056.8 932.1 1059.1 935.6Q1061.3 939.2 1059.1 942.8Q1056.8 946.3 1054.2 945.4Q1051.5 944.5 1051.1 941.0Z" fill="#a8a23e" stroke="#a8a23e" stroke-width="3.2" stroke-linejoin="round"/>
<path d="M1054.2 950.3Q1053.3 948.1 1057.7 945.4Q1062.2 942.8 1064.8 946.3Q1067.5 949.9 1064.8 952.1Q1062.2 954.3 1058.6 953.4Q1055.1 952.5 1054.2 950.3Z" fill="#b0a848" stroke="#b0a848" stroke-width="3.2" stroke-linejoin="round"/>
<path d="M1046.6 917.0Q1045.3 912.6 1049.3 909.0Q1053.3 905.5 1054.2 911.7Q1055.1 917.9 1051.5 919.7Q1048.0 921.4 1046.6 917.0Z" fill="#86b04a" stroke="#86b04a" stroke-width="3.2" stroke-linejoin="round"/>
<path d="M1028.9 872.6Q1028.4 866.4 1030.2 858.4Q1032.0 850.4 1038.2 846.0Q1044.4 841.5 1052.4 841.1Q1060.4 840.6 1069.3 841.1Q1078.2 841.5 1085.3 842.4Q1092.4 843.3 1095.9 848.6Q1099.5 853.9 1099.9 860.2Q1100.4 866.4 1097.2 870.8Q1094.1 875.3 1086.1 876.1Q1078.2 877.0 1070.2 875.3Q1062.2 873.5 1059.5 878.8Q1056.8 884.1 1051.5 888.6Q1046.2 893.0 1040.9 891.2Q1035.5 889.5 1032.4 884.1Q1029.3 878.8 1028.9 872.6Z" fill="#2a1c0c" stroke="#150c06" stroke-width="2"/>
<path d="M1042.6 848.6 C1053.3 843.3 1062.2 846.8 1067.5 855.7" fill="none" stroke="#c9a03a" stroke-width="3" stroke-linecap="round"/>
<path d="M1053.3 851.3 C1060.4 850.4 1062.2 855.7 1061.3 862.8" fill="none" stroke="#8a5a1c" stroke-width="2.6" stroke-linecap="round"/>
<path d="M1067.5 869.9 C1076.4 873.5 1087.0 871.7 1095.0 864.6" fill="none" stroke="#d8b850" stroke-width="3.2" stroke-linecap="round"/>
<path d="M1088.8 846.8 C1094.1 850.4 1096.8 857.5 1095.9 862.8" fill="none" stroke="#b89030" stroke-width="2.2" stroke-linecap="round"/>
<ellipse cx="1044.8" cy="867.6" rx="13.2" ry="14" fill="#7d8a22" stroke="#b9b040" stroke-width="1.6"/>
<ellipse cx="1046.5" cy="869.0" rx="9" ry="10" fill="#6c7a1c"/>
<path d="M1034.6 868.2 C1034.6 861.0 1038.2 855.7 1043.5 854.8" fill="none" stroke="#d8dc70" stroke-width="1.6" stroke-linecap="round"/>
<ellipse cx="1080.8" cy="856.1" rx="7" ry="6.6" fill="#8a9428" stroke="#c0b040" stroke-width="1.2"/>
</svg>
<span class="t rt" style="word-spacing:2.302px;left:778.64px;top:181.30px;font-size:15px;line-height:21px;height:21px;color:#000;">When hunting, dragonflies employ motion camouflage</span>
<span class="t rt" style="letter-spacing:0.036px;left:739.97px;top:202.35px;font-size:15px;line-height:21px;height:21px;color:#000;">and aerial ambush. In the face of predators, their agility is</span>
<span class="t rt" style="letter-spacing:0.062px;left:739.60px;top:223.40px;font-size:15px;line-height:21px;height:21px;color:#000;">key to their own survival. Anchored</span><span class="t rt" style="letter-spacing:0.294px;left:1060.76px;top:223.40px;font-size:15px;line-height:21px;height:21px;color:#000;">by flight</span>
<span class="t rt" style="letter-spacing:0.062px;left:739.66px;top:244.45px;font-size:15px;line-height:21px;height:21px;color:#000;">muscles in their thoraxes and wing</span><span class="t rt" style="letter-spacing:0.012px;left:1065.76px;top:244.45px;font-size:15px;line-height:21px;height:21px;color:#000;">bases, they</span>
<span class="t rt" style="letter-spacing:0.035px;left:739.97px;top:265.50px;font-size:15px;line-height:21px;height:21px;color:#000;">can fly up to 34 miles per hour and</span><span class="t rt" style="letter-spacing:0.041px;left:1066.08px;top:265.50px;font-size:15px;line-height:21px;height:21px;color:#000;">cruise at an</span>
<span class="t rt" style="letter-spacing:-0.117px;left:739.97px;top:286.55px;font-size:15px;line-height:21px;height:21px;color:#000;">average of 10 miles per hour. They</span><span class="t rt" style="letter-spacing:0.257px;left:1055.31px;top:286.55px;font-size:15px;line-height:21px;height:21px;color:#000;">fly backward</span>
<span class="t rt" style="word-spacing:2.280px;left:739.97px;top:307.60px;font-size:15px;line-height:21px;height:21px;color:#000;">at three body lengths per second and forward at 100 body</span>
<span class="t rt" style="word-spacing:1.342px;left:739.60px;top:328.65px;font-size:15px;line-height:21px;height:21px;color:#000;">lengths per second. This direct power from their wing bases</span>
<span class="t rt" style="word-spacing:1.407px;left:740.41px;top:349.70px;font-size:15px;line-height:21px;height:21px;color:#000;">further distinguishes dragonflies from other insects, many of</span>
<span class="t rt" style="word-spacing:3.234px;left:740.66px;top:370.75px;font-size:15px;line-height:21px;height:21px;color:#000;">which can fly faster but without as much sophistication or</span>
<span class="t rt" style="letter-spacing:0.154px;left:739.60px;top:391.80px;font-size:15px;line-height:21px;height:21px;color:#000;">high power-weight ratios.</span>
<span class="t rt" style="letter-spacing:0.298px;left:766.81px;top:412.85px;font-size:15px;line-height:21px;height:21px;color:#000;">Dragonflies’</span><span class="t rt" style="letter-spacing:0.056px;left:918.41px;top:412.85px;font-size:15px;line-height:21px;height:21px;color:#000;">four styles of flight, augmented by</span>
<span class="t rt" style="letter-spacing:0.135px;left:739.97px;top:433.90px;font-size:15px;line-height:21px;height:21px;color:#000;">associated</span><span class="t rt" style="letter-spacing:0.159px;left:931.17px;top:433.90px;font-size:15px;line-height:21px;height:21px;color:#000;">aerial structures and patterns,</span>
<span class="t rt" style="letter-spacing:0.133px;left:739.97px;top:454.95px;font-size:15px;line-height:21px;height:21px;color:#000;">are studied in</span><span class="t rt" style="letter-spacing:0.037px;left:931.17px;top:454.95px;font-size:15px;line-height:21px;height:21px;color:#000;">aerodynamic engineering. When</span>
<span class="t rt" style="letter-spacing:0.852px;left:739.60px;top:476.00px;font-size:15px;line-height:21px;height:21px;color:#000;">hovering</span><span class="t rt" style="letter-spacing:1.101px;left:812.17px;top:476.00px;font-size:15px;line-height:21px;height:21px;color:#000;">and</span><span class="t rt" style="letter-spacing:0.047px;left:926.36px;top:476.00px;font-size:15px;line-height:21px;height:21px;color:#000;">moving slowly, they employ</span>
<span class="t rt" style="letter-spacing:0.241px;left:739.97px;top:497.05px;font-size:15px;line-height:21px;height:21px;color:#000;">counterstroking for</span><span class="t rt" style="letter-spacing:0.166px;left:894.88px;top:497.05px;font-size:15px;line-height:21px;height:21px;color:#000;">efficient, high lift. When flying fast,</span>
<span class="t rt" style="letter-spacing:0.086px;left:740.41px;top:518.10px;font-size:15px;line-height:21px;height:21px;color:#000;">they use phased stroking to build more thrust without as</span>
<span class="t rt" style="letter-spacing:0.105px;left:739.66px;top:539.15px;font-size:15px;line-height:21px;height:21px;color:#000;">much lift. When making rapid direction changes,</span>
<span class="t rt" style="word-spacing:3.490px;left:740.41px;top:560.20px;font-size:15px;line-height:21px;height:21px;color:#000;">they maximize thrust with synchronized</span><span class="t rt" style="letter-spacing:0.121px;left:1032.62px;top:560.20px;font-size:15px;line-height:21px;height:21px;color:#000;">stroking. They</span>
<span class="t rt" style="letter-spacing:0.053px;left:739.66px;top:581.25px;font-size:15px;line-height:21px;height:21px;color:#000;">utilize gliding to free glide updraft or</span><span class="t rt" style="letter-spacing:0.670px;left:1068.51px;top:581.25px;font-size:15px;line-height:21px;height:21px;color:#000;">to</span>
<span class="t rt" style="letter-spacing:0.099px;left:740.41px;top:602.30px;font-size:15px;line-height:21px;height:21px;color:#000;">thermoregulate through convective</span><span class="t rt" style="letter-spacing:0.174px;left:1072.28px;top:602.30px;font-size:15px;line-height:21px;height:21px;color:#000;">cooling,</span>
<span class="t rt" style="letter-spacing:0.045px;left:739.97px;top:623.35px;font-size:15px;line-height:21px;height:21px;color:#000;">enabling them to move quickly</span><span class="t rt" style="letter-spacing:0.469px;left:1072.96px;top:623.35px;font-size:15px;line-height:21px;height:21px;color:#000;">without</span>
<span class="t rt" style="letter-spacing:0.060px;left:739.97px;top:644.40px;font-size:15px;line-height:21px;height:21px;color:#000;">extra heat production, especially on</span><span class="t rt" style="letter-spacing:0.148px;left:1058.20px;top:644.40px;font-size:15px;line-height:21px;height:21px;color:#000;">hot days.</span>
<span class="t rt" style="word-spacing:0.162px;left:766.19px;top:665.45px;font-size:15px;line-height:21px;height:21px;color:#000;">To avoid overheating, some species also have dark spots</span>
<span class="t rt" style="word-spacing:0.879px;left:739.97px;top:686.50px;font-size:15px;line-height:21px;height:21px;color:#000;">on their wings that provide shade, while others simply spend</span>
<span class="t rt" style="letter-spacing:0.029px;left:740.41px;top:707.55px;font-size:15px;line-height:21px;height:21px;color:#000;">time under natural shade to cool down. Others fly in close</span>
<span class="t rt" style="word-spacing:1.445px;left:739.66px;top:728.60px;font-size:15px;line-height:21px;height:21px;color:#000;">proximity to the water for cooling. Many notably assume the</span>
<span class="t rt" style="word-spacing:1.676px;left:740.10px;top:749.65px;font-size:15px;line-height:21px;height:21px;color:#000;">“obelisk posture,” which looks like a handstand, to minimize</span>
<span class="t rt" style="word-spacing:12.123px;left:740.22px;top:770.70px;font-size:15px;line-height:21px;height:21px;color:#000;">solar exposure. As cold-blooded insects, dragonflies</span>
<span class="t rt" style="word-spacing:2.584px;left:739.60px;top:791.75px;font-size:15px;line-height:21px;height:21px;color:#000;">increase their flight muscle temperature with the sun or by</span>
<span class="t rt" style="word-spacing:3.093px;left:739.66px;top:812.80px;font-size:15px;line-height:21px;height:21px;color:#000;">rapidly vibrating their wings to create heat, also known as</span>
<span class="t rt" style="letter-spacing:0.505px;left:740.10px;top:833.85px;font-size:15px;line-height:21px;height:21px;color:#000;">“wing-whirring.”</span>
<span class="t rt" style="word-spacing:0.954px;left:764.99px;top:854.90px;font-size:15px;line-height:21px;height:21px;color:#000;">The unique physiological structure of the dragonfly’s four</span>
<span class="t rt" style="letter-spacing:0.087px;left:740.66px;top:875.95px;font-size:15px;line-height:21px;height:21px;color:#000;">wings is characterized by pterostigmata that provide</span>
<svg class="abs" style="left:723px;top:116px" width="447" height="775" viewBox="1431 350 447 775">
<defs>
<clipPath id="c1"><ellipse cx="1728" cy="494.200" rx="45" ry="35.200"/></clipPath>
<clipPath id="c2"><ellipse cx="1591" cy="692.600" rx="45.200" ry="34.800"/></clipPath>
<clipPath id="c3"><ellipse cx="1732.200" cy="850.800" rx="45.200" ry="34.800"/></clipPath>
<radialGradient id="j1" gradientUnits="userSpaceOnUse" cx="1738" cy="478" r="50"><stop offset="0" stop-color="#b4e884"/><stop offset=".45" stop-color="#7fd06a"/><stop offset="1" stop-color="#2f9648"/></radialGradient>
<linearGradient id="sky" gradientUnits="userSpaceOnUse" x1="1546" y1="690" x2="1636" y2="670"><stop offset="0" stop-color="#a97de0"/><stop offset=".4" stop-color="#d67cc0"/><stop offset=".7" stop-color="#f57c80"/><stop offset="1" stop-color="#ff8a55"/></linearGradient>
<radialGradient id="j3" gradientUnits="userSpaceOnUse" cx="1734" cy="826" r="52"><stop offset="0" stop-color="#9ae0bc"/><stop offset=".5" stop-color="#5fae7c"/><stop offset="1" stop-color="#3f8a58"/></radialGradient>
<linearGradient id="bw" x1="0" y1="0" x2="1" y2="0"><stop offset="0" stop-color="#a8d4ee"/><stop offset=".5" stop-color="#96d0d8"/><stop offset="1" stop-color="#8fa6dc"/></linearGradient>
<linearGradient id="bt" gradientUnits="userSpaceOnUse" x1="1722" y1="862" x2="1750" y2="852"><stop offset="0" stop-color="#ff6a4a"/><stop offset=".35" stop-color="#ff9a30"/><stop offset=".6" stop-color="#f4d030"/><stop offset=".78" stop-color="#4fd860"/><stop offset="1" stop-color="#2a90f0"/></linearGradient>
</defs>
<!-- oval 1 -->
<g clip-path="url(#c1)">
<rect x="1680" y="456" width="96" height="78" fill="url(#j1)"/>
<path d="M1680 456h22l-6 30 4 48h-20z" fill="#2f8f42"/>
<path d="M1694 470l8-6 1 40 2 30h-10z" fill="#6a6e2a"/>
<path d="M1680 520c20-14 40-12 60-4s30 4 40-6v30h-100z" fill="#3fa552"/>
<path d="M1680 528c24-10 50-6 96 0v10h-96z" fill="#2f9448"/>
<path d="M1764 470l6 60h-3l-5-56zM1770 476l4 40h-2z" fill="#2f8a3c"/>
<path d="M1712 458l8 18-14-12 18 14-22-6zM1742 458l-6 18 16-16-18 16z" fill="#58b040"/>
<path d="M1727 488c-10-10-24-18-32-16c-4 4 4 16 14 20c6 2 12 0 18-4z" fill="url(#bw)" stroke="#6a9ab8" stroke-width=".5"/>
<path d="M1728 492c-10 0-24 2-29 8c-2 6 8 10 16 8c6-2 10-8 13-16z" fill="url(#bw)" stroke="#6a9ab8" stroke-width=".5"/>
<path d="M1732 487c8-6 20-12 27-11c2 4-4 10-12 13c-6 2-10 1-15-2z" fill="url(#bw)" stroke="#6a9ab8" stroke-width=".5"/>
<path d="M1733 491c8-2 20-4 26-2c1 5-6 10-14 13c-5 1-9-4-12-11z" fill="url(#bw)" stroke="#6a9ab8" stroke-width=".5"/>
<path d="M1726.600 485.500l4.800-1.500 2.200 9 7.600 30-1.600.600-9.600-28z" fill="#b65a22" stroke="#7a3412" stroke-width=".500"/>
<ellipse cx="1728.800" cy="483.600" rx="3.200" ry="2.200" fill="#8a3018"/>
</g>
<ellipse cx="1728" cy="494.200" rx="45" ry="35.200" fill="none" stroke="#050505" stroke-width="2.100"/>
<!-- oval 2 -->
<g clip-path="url(#c2)">
<rect x="1544" y="655" width="94" height="76" fill="url(#sky)"/>
<circle cx="1625" cy="681" r="14.500" fill="#ffe274"/>
<path d="M1544 693l10 3 6-1 12 6 8 2 8-2 14 8 14 6h-72z" fill="#1d5e62"/>
<path d="M1606 710l10-5 6 2 8-4 8 5v6h-36z" fill="#3f5ec0"/>
<path d="M1544 706l20 8 20 4 22-2 14 4v14h-76z" fill="#2a8a3a"/>
<path d="M1570 718l26-4 12 4-8 6h-24z" fill="#49b030"/>
<path d="M1576 728l24-8 16-4 10 0 10-4v22h-60z" fill="#6e9cec"/>
<path d="M1608 714h20v10l-18 6z" fill="#ff8a3a"/>
<path d="M1590 686c-8-8-22-16-28-14c-2 4 6 12 16 16c5 1 8 0 12-2z" fill="#d8b4f0" fill-opacity=".7" stroke="#f4dcf8" stroke-width=".8"/>
<path d="M1590 689c-10-2-24-2-29 2c0 6 10 10 18 10c6-2 9-6 11-12z" fill="#e6a8e6" fill-opacity=".7" stroke="#f6dcf6" stroke-width=".8"/>
<path d="M1595 686c10-4 24-6 31-4c0 5-8 9-18 10c-6 0-10-2-13-6z" fill="#f6c0d0" fill-opacity=".7" stroke="#fbe4e8" stroke-width=".8"/>
<path d="M1594 690c8 0 20 4 24 8c-2 5-12 6-20 2c-3-2-4-6-4-10z" fill="#eea8dc" fill-opacity=".7" stroke="#f8dcf0" stroke-width=".8"/>
<path d="M1593 683l-2 12-5 22" stroke="#c02a3a" stroke-width="2.200" stroke-linecap="round" fill="none"/>
<path d="M1593 683l-1.500 9" stroke="#8a7a20" stroke-width="3" stroke-linecap="round"/>
<circle cx="1593.500" cy="682" r="2" fill="#3a1a1a"/>
</g>
<ellipse cx="1591" cy="692.600" rx="45.200" ry="34.800" fill="none" stroke="#050505" stroke-width="2.100"/>
<!-- oval 3 -->
<g clip-path="url(#c3)">
<rect x="1685" y="814" width="96" height="76" fill="url(#j3)"/>
<path d="M1692 814h10l-8 40-8 10v-30z" fill="#7a5a2a"/>
<path d="M1702 814l8 0-6 36-8 8z" fill="#3f7a4c"/>
<path d="M1770 814l10 20v40l-8-10z" fill="#3a8a5a"/>
<path d="M1686 880l6-30 2 22 6-24 0 24 8-18-4 22 10-12-10 22z" fill="#8ad050"/>
<path d="M1700 872c20-8 50-8 78 4v16h-90z" fill="#4a9862"/>
<ellipse cx="1742" cy="874" rx="16" ry="8" fill="#2f7448" transform="rotate(30 1742 874)"/>
<g stroke="#15301f" stroke-width="1.100" fill="none" stroke-linecap="round"><path d="M1727 840c-6-8-14-12-22-14M1730 838c2-10 6-18 10-24M1726 846c-8 2-16 6-24 12M1728 852c-6 2-10 4-14 8M1730 860c-4 4-6 8-8 14M1746 846c6 2 10 6 16 14M1750 856c4 6 8 10 12 16M1733 840c4-4 8-6 12-8M1732 866c-2 6-4 10-6 16M1738 872c0 4 1 8 2 12"/></g>
<ellipse cx="1738" cy="860" rx="10.500" ry="16" fill="url(#bt)" transform="rotate(-28 1738 860)"/>
<ellipse cx="1729.500" cy="847" rx="6" ry="5" fill="#7ee040" transform="rotate(-28 1729 847)"/>
<path d="M1733 842c4-1 8 1 9 5l-6 3z" fill="#2aa8f0"/>
<ellipse cx="1726.500" cy="840.500" rx="3.500" ry="3" fill="#f08a2a"/>
<circle cx="1723.500" cy="842" r="1.500" fill="#1a1a1a"/>
</g>
<ellipse cx="1732.200" cy="850.800" rx="45.200" ry="34.800" fill="none" stroke="#050505" stroke-width="2.100"/>
</svg>
</div>
<div id="popshadow"></div>
<svg class="abs" style="left:452.8px;top:535px" width="16" height="44" viewBox="0 0 16 44"><defs><linearGradient id="arw" x1="0" y1="0" x2="0" y2="1"><stop offset="0" stop-color="#cccdea"/><stop offset="1" stop-color="#b3cdf4"/></linearGradient></defs><path d="M0 4c1 6 4 9 9 13.500c3 2.700 4.600 3.600 4.600 4.600s-1.600 1.900-4.600 4.600c-5 4.500-8 7.500-9 13.500z" fill="url(#arw)" stroke="rgba(60,70,120,.32)" stroke-width=".8"/></svg>
<div id="pop"><div id="popbg"></div>
<div id="sf"></div>
<svg class="abs" style="left:26.5px;top:24px" width="25" height="27" viewBox="-12.5 -13.5 25 27" fill="none" stroke-width="1.6" stroke-linecap="round">
<ellipse cx="0.00" cy="-7.60" rx="5.6" ry="3.3" transform="rotate(22.0 0.00 -7.60)" stroke="#f2603c" opacity=".95"/>
<ellipse cx="5.94" cy="-4.74" rx="5.6" ry="3.3" transform="rotate(73.4 5.94 -4.74)" stroke="#f2628c" opacity=".95"/>
<ellipse cx="7.41" cy="1.69" rx="5.6" ry="3.3" transform="rotate(124.9 7.41 1.69)" stroke="#e45cd2" opacity=".95"/>
<ellipse cx="3.30" cy="6.85" rx="5.6" ry="3.3" transform="rotate(176.3 3.30 6.85)" stroke="#9a72f2" opacity=".95"/>
<ellipse cx="-3.30" cy="6.85" rx="5.6" ry="3.3" transform="rotate(227.7 -3.30 6.85)" stroke="#4a8ef2" opacity=".95"/>
<ellipse cx="-7.41" cy="1.69" rx="5.6" ry="3.3" transform="rotate(279.1 -7.41 1.69)" stroke="#36b8ea" opacity=".95"/>
<ellipse cx="-5.94" cy="-4.74" rx="5.6" ry="3.3" transform="rotate(330.6 -5.94 -4.74)" stroke="#f09a32" opacity=".95"/>
</svg>
<span class="t" style="letter-spacing:0.680px;left:54.56px;top:24.42px;font-size:21px;line-height:27px;height:27px;color:#a78f9d;">Describe your change</span>
<div class="pbtn" style="left:16.3px;top:75.3px;width:173px;height:84.5px"></div><div class="pbtn" style="left:206px;top:75.3px;width:173px;height:84.5px"></div>
<span class="t pp" style="letter-spacing:0.687px;left:53.56px;top:124.02px;font-size:21px;line-height:27px;height:27px;color:#2a1229;">Proofread</span>
<span class="t pp" style="letter-spacing:0.668px;left:254.36px;top:124.02px;font-size:21px;line-height:27px;height:27px;color:#33161d;">Rewrite</span>
<div class="abs" style="left:8px;top:255.5px;width:379px;height:35.8px;border-radius:8px;background:linear-gradient(90deg,rgba(110,75,115,.21),rgba(60,85,150,.22))"></div>
<div class="sep" style="top:176.4px"></div><div class="sep" style="top:298.8px"></div><div class="sep" style="top:457.4px"></div>
<div class="ibox" style="top:310.5px"></div><div class="ibox" style="top:346.55px"></div><div class="ibox" style="top:382.6px"></div><div class="ibox" style="top:418.65px"></div>
<span class="t pp" style="letter-spacing:0.522px;left:58.66px;top:188.92px;font-size:21px;line-height:27px;height:27px;color:#2a1229;">Friendly</span>
<span class="t pp" style="letter-spacing:0.588px;left:58.66px;top:225.02px;font-size:21px;line-height:27px;height:27px;color:#2a1229;">Professional</span>
<span class="t pp" style="letter-spacing:0.578px;left:59.32px;top:260.82px;font-size:21px;line-height:27px;height:27px;color:#281530;">Concise</span>
<span class="t pp" style="letter-spacing:0.285px;left:59.64px;top:311.32px;font-size:21px;line-height:27px;height:27px;color:#1b1a3a;">Summary</span>
<span class="t pp" style="letter-spacing:0.312px;left:58.66px;top:347.42px;font-size:21px;line-height:27px;height:27px;color:#14203f;">Key Points</span>
<span class="t pp" style="letter-spacing:0.394px;left:59.97px;top:383.52px;font-size:21px;line-height:27px;height:27px;color:#10203f;">Table</span>
<span class="t pp" style="letter-spacing:0.697px;left:58.66px;top:419.62px;font-size:21px;line-height:27px;height:27px;color:#10203f;">List</span>
<span class="t pp" style="letter-spacing:0.589px;left:59.32px;top:469.32px;font-size:21px;line-height:27px;height:27px;color:#0e1f40;">Compose...</span>
<svg class="abs" style="left:0;top:0" width="395" height="509" viewBox="326 432.500 395 509" fill="none" stroke="#2a1229" stroke-width="1.700" stroke-linecap="round" stroke-linejoin="round">
<!-- proofread -->
<circle cx="427" cy="535" r="7.700" stroke-width="2"/>
<path d="M432.700 540.700l6.200 5.700" stroke-width="2.400"/>
<path d="M423.600 532.600h7.200M423.600 536h5.400" stroke-width="1.500"/>
<!-- rewrite -->
<g stroke="#33161d">
<path d="M625.300 527.800a10.300 10.300 0 1 1-7.200-1.300" stroke-width="2"/>
<path d="M617.400 523.300l4.600 3.200-4.600 3.200z" fill="#33161d" stroke-width="1.200"/>
<path d="M614.300 541.300l9.700-9.300" stroke-width="2"/>
</g>
<!-- friendly -->
<circle cx="360" cy="634.500" r="10.400"/>
<circle cx="356.900" cy="631.700" r="1.350" fill="#2a1229" stroke="none"/><circle cx="363.300" cy="631.700" r="1.350" fill="#2a1229" stroke="none"/>
<path d="M355.700 637.600c2.300 3 6.300 3 8.600 0" stroke-width="1.600"/>
<!-- professional -->
<rect x="349" y="664.300" width="22" height="15" rx="3"/>
<path d="M355.400 664v-2a2 2 0 0 1 2-2h5.200a2 2 0 0 1 2 2v2"/>
<path d="M349.300 669.600h21.400" stroke-width="1.600"/>
<path d="M357.800 669.800h4.400v1.200a1 1 0 0 1-1 1h-2.400a1 1 0 0 1-1-1z" fill="#2a1229" stroke-width="1"/>
<!-- concise -->
<g stroke="#281530"><path d="M350.300 705h20M350.300 709.600h20" stroke-width="1.800"/>
<path d="M357.400 698h5.600l-2.800 3.300zM357.400 716.700h5.600l-2.800-3.300z" fill="#281530" stroke-width=".8"/></g>
<!-- summary -->
<path d="M352.600 750.800h15.600M352.600 755.500h9.600" stroke="#1b1a3a" stroke-width="2.600"/>
<!-- key points -->
<g stroke="#14203f" stroke-width="2.400"><path d="M356.700 786.800h12M356.700 791.700h12M356.700 796.600h12"/><path d="M352.300 786.800h.4M352.300 791.700h.4M352.300 796.600h.4"/></g>
<!-- table -->
<g stroke="#10203f" stroke-width="1.800"><rect x="352.300" y="822" width="16.800" height="13" rx="2"/><path d="M352.500 826.300h16.400M352.500 830.700h16.400M360.700 822.200v12.600"/></g>
<!-- list -->
<g stroke="#10203f" stroke-width="2.400"><path d="M356.700 858.300h7.200M356.700 863.200h11.600M356.700 868.200h6.600"/><path d="M352.300 858.300h.4M352.300 863.200h.4M352.300 868.200h.4"/></g>
<!-- compose -->
<path d="M353.300 923.300l11.600-11" stroke="#0e1f40" stroke-width="2.600"/>
<path d="M366.600 910.600l.9-.9" stroke="#0e1f40" stroke-width="2.200"/>
</svg>
</div>
</div>

</body>
</html>
